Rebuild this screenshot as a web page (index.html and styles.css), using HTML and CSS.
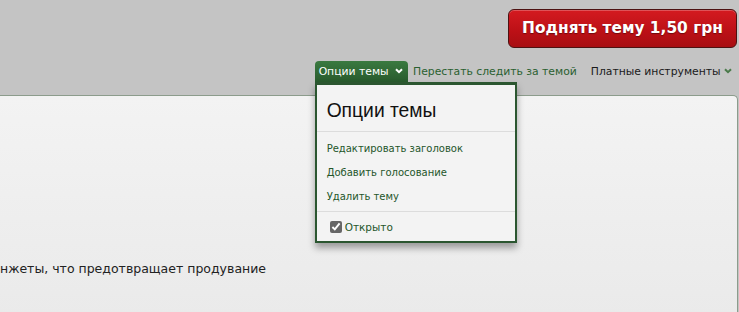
FILE: index.html
```html
<!DOCTYPE html>
<html lang="ru">
<head>
  <meta charset="UTF-8">
  <title>Опции темы</title>
  <link rel="stylesheet" href="styles.css">
</head>
<body>
  <div class="header">
    <div class="bump-row">
      <a class="bump" href="#">Поднять тему 1,50 грн</a>
    </div>
    <div class="tabs">
      <div class="tab active">
        Опции темы
        <svg class="chev" width="8" height="6" viewBox="0 0 8 6"><path d="M1 1.2 L4 4.2 L7 1.2" fill="none" stroke="currentColor" stroke-width="2"/></svg>
        <!-- Dropdown menu -->
        <div class="menu">
          <h3>Опции темы</h3>
          <ul>
            <li><a href="#">Редактировать заголовок</a></li>
            <li><a href="#">Добавить голосование</a></li>
            <li><a href="#">Удалить тему</a></li>
          </ul>
          <label class="open"><input type="checkbox" checked> Открыто</label>
        </div>
      </div>
      <a class="tab link" href="#">Перестать следить за темой</a>
      <div class="tab plain">
        Платные инструменты
        <svg class="chev green" width="8" height="6" viewBox="0 0 8 6"><path d="M1 1.2 L4 4.2 L7 1.2" fill="none" stroke="currentColor" stroke-width="2"/></svg>
      </div>
    </div>
  </div>

  <div class="panel">
    <p class="text">нжеты, что предотвращает продувание</p>
  </div>
</body>
</html>
```

FILE: styles.css
```css
body {
  margin: 0;
  font-family: "DejaVu Sans", Verdana, sans-serif;
  background: #c4c4c4;
  height: 312px;
  overflow: hidden;
}

.header {
  height: 95px;
}

.bump-row {
  display: flex;
  justify-content: flex-end;
  padding: 9px 2px 0 0;
}

.bump {
  display: block;
  width: 227px;
  height: 37px;
  line-height: 37px;
  text-align: center;
  border: 1px solid #4d1212;
  border-radius: 6px;
  background: linear-gradient(#d41a20, #bb1016 60%, #a80e12);
  box-shadow: inset 0 1px 0 rgba(255, 255, 255, 0.25);
  color: #fff;
  font-weight: bold;
  font-size: 15.4px;
  text-decoration: none;
  text-shadow: 0 1px 1px rgba(0, 0, 0, 0.4);
}

.tabs {
  display: flex;
  justify-content: flex-end;
  align-items: flex-end;
  margin-top: 13px;
  padding-right: 3px;
  font-size: 10.8px;
}

.tab {
  height: 22px;
  line-height: 22px;
  padding: 0 4px;
  white-space: nowrap;
}

.tab.active {
  position: relative;
  background: linear-gradient(#3a7a40, #27592c);
  color: #fff;
  border-radius: 4px 4px 0 0;
  padding: 0 5px 0 4px;
  margin-right: 1px;
}

.tab.active .chev {
  margin-left: 3px;
}

.tab.link {
  color: #2a6030;
  text-decoration: none;
}

.tab.plain {
  color: #1a1a1a;
  margin-left: 6px;
}

.chev {
  vertical-align: 1px;
}

.chev.green {
  color: #4a7a4a;
}

.menu {
  position: absolute;
  top: 21px;
  left: 0;
  width: 198px;
  background: #f3f3f3;
  border: 2px solid #2b5630;
  border-top-width: 3px;
  box-shadow: 0 5px 7px rgba(0, 0, 0, 0.35);
  color: #222;
  line-height: normal;
  z-index: 2;
}

.menu h3 {
  margin: 0;
  padding: 15px 10px 9px;
  font-family: "Liberation Sans", Arial, sans-serif;
  font-weight: normal;
  font-size: 19.3px;
  color: #111;
  border-bottom: 1px solid #dcdcdc;
}

.menu ul {
  list-style: none;
  margin: 0;
  padding: 5px 0 2px;
  border-bottom: 1px solid #dcdcdc;
}

.menu li {
  height: 24px;
  line-height: 24px;
  padding: 0 10px;
  font-size: 10px;
}

.menu li a {
  color: #24562a;
  text-decoration: none;
}

.open {
  display: flex;
  align-items: center;
  gap: 3px;
  padding: 9px 10px 8px 13px;
  font-size: 10.5px;
  color: #24562a;
}

.open input {
  margin: 0;
  width: 12px;
  height: 12px;
  accent-color: #666;
}

.panel {
  height: 220px;
  margin-right: 1px;
  border-top: 1px solid #8c9c8c;
  border-right: 1px solid #8c9c8c;
  border-radius: 0 5px 0 0;
  background: linear-gradient(#f3f3f3, #eaeaea);
}

.text {
  margin: 0;
  padding-top: 165px;
  font-size: 12.5px;
  color: #222;
}
```
